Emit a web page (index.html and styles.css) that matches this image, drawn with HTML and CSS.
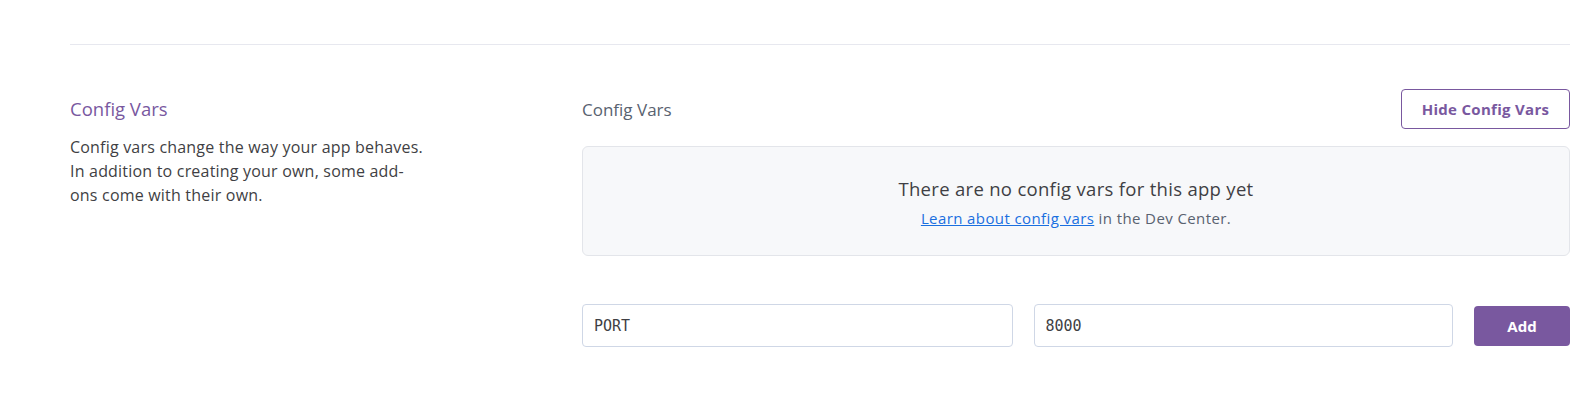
FILE: index.html
```html
<!DOCTYPE html>
<html lang="en">
<head>
<meta charset="utf-8">
<title>Config Vars</title>
<link rel="stylesheet" href="styles.css">
</head>
<body>
<div class="page">
  <hr class="divider">
  <section class="section">
    <div class="intro">
      <h2 class="intro-title">Config Vars</h2>
      <p class="intro-text">Config vars change the way your app behaves. In addition to creating your own, some add-ons come with their own.</p>
    </div>
    <div class="content">
      <div class="content-head">
        <h3 class="content-title">Config Vars</h3>
        <button class="btn btn-outline" type="button">Hide Config Vars</button>
      </div>
      <div class="empty">
        <div class="empty-title">There are no config vars for this app yet</div>
        <div class="empty-sub"><a href="#" class="link">Learn about config vars</a> in the Dev Center.</div>
      </div>
      <form class="add-row">
        <input class="field" type="text" value="PORT">
        <input class="field" type="text" value="8000">
        <button class="btn btn-primary" type="button">Add</button>
      </form>
    </div>
  </section>
</div>
</body>
</html>
```

FILE: styles.css
```css
* { box-sizing: border-box; }
html, body { margin: 0; padding: 0; background: #fff; }
body {
  font-family: "Open Sans", "Noto Sans", sans-serif;
  color: #3f3f44;
}
.page {
  padding: 44px 8px 0 70px;
}
.divider {
  margin: 0;
  border: 0;
  border-top: 1px solid #e7e8ef;
  height: 0;
}
.section {
  display: grid;
  grid-template-columns: 512px 1fr;
  margin-top: 44px;
}
.intro-title {
  margin: 8px 0 0;
  font-size: 18.5px;
  line-height: 24px;
  font-weight: 400;
  color: #79589f;
}
.intro-text {
  margin: 14px 0 0;
  width: 360px;
  font-size: 16px;
  letter-spacing: 0.2px;
  line-height: 24px;
  color: #3f3f44;
}
.content-head {
  display: flex;
  justify-content: space-between;
  align-items: center;
  height: 40px;
}
.content-title {
  margin: 0;
  font-size: 17px;
  font-weight: 400;
  color: #596270;
}
.btn {
  font-family: inherit;
  font-weight: 700;
  font-size: 14px;
  border-radius: 4px;
  cursor: pointer;
}
.btn-outline {
  height: 40px;
  width: 169px;
  background: #fff;
  color: #79589f;
  border: 1px solid #79589f;
  font-size: 15px;
  letter-spacing: 0.3px;
}
.empty {
  margin-top: 17px;
  height: 110px;
  background: #f7f8fa;
  border: 1px solid #e3e5ea;
  border-radius: 6px;
  display: flex;
  flex-direction: column;
  align-items: center;
  justify-content: center;
  padding-top: 2px;
}
.empty-title {
  font-size: 18.5px;
  letter-spacing: 0.3px;
  line-height: 24px;
  color: #3f3f44;
}
.empty-sub {
  margin-top: 7px;
  font-size: 15px;
  letter-spacing: 0.4px;
  line-height: 20px;
  color: #596270;
}
.link {
  color: #1a6fe0;
  text-decoration: underline;
}
.add-row {
  margin-top: 48px;
  display: grid;
  grid-template-columns: 430fr 419fr 96px;
  gap: 21px;
  align-items: center;
}
.field {
  height: 43px;
  width: 100%;
  border: 1px solid #cfd7e6;
  border-radius: 4px;
  padding: 0 11px;
  font-family: "DejaVu Sans Mono", monospace;
  font-size: 15px;
  color: #3f3f44;
  background: #fff;
}
.btn-primary {
  height: 40px;
  background: #79589f;
  color: #fff;
  border: 0;
  font-size: 15px;
}
```
